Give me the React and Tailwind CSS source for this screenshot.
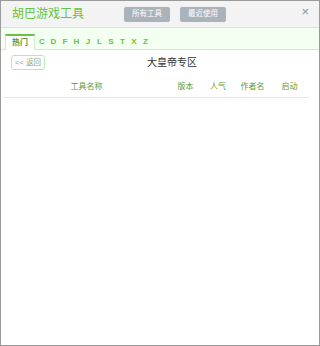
const LETTERS = ['C', 'D', 'F', 'H', 'J', 'L', 'S', 'T', 'X', 'Z']

const COLUMNS = [
  { label: '工具名称', w: 'w-[167px]' },
  { label: '版本', w: 'w-[31px]' },
  { label: '人气', w: 'w-[34px]' },
  { label: '作者名', w: 'w-[35px]' },
  { label: '启动', w: 'w-[39px]' },
]

export default function App() {
  return (
    <div
      className="flex h-[346px] w-[320px] flex-col border border-[#9a9a9a] bg-white"
      style={{ fontFamily: '"Liberation Sans", "Noto Sans CJK SC", sans-serif' }}
    >
      {/* header */}
      <div className="flex h-[27px] shrink-0 items-center border-b border-[#c9efc4] bg-[#f3f3f3] pl-[11px] pr-[10px]">
        <span className="w-[112px] text-[12px] leading-none text-[#66c43c]">胡巴游戏工具</span>
        <button className="flex h-[15px] w-[46px] items-center justify-center rounded-[2px] bg-[#aab3bb] text-[7.5px] text-white">
          所有工具
        </button>
        <button className="ml-[10px] flex h-[15px] w-[46px] items-center justify-center rounded-[2px] bg-[#aab3bb] text-[7.5px] text-white">
          最近使用
        </button>
        <span className="ml-auto -mt-[6px] text-[13px] leading-none text-[#8a929a]">×</span>
      </div>

      {/* letter tabs */}
      <div className="flex h-[22px] shrink-0 items-end border-b border-[#c9efc4] bg-[#f3fff1] pl-[4px]">
        <div className="-mb-px flex h-[16px] w-[30px] items-center justify-center border-x border-t-2 border-[#c9efc4] border-t-[#6cbf4a] bg-white text-[8px] font-bold text-[#5a9a2e]">
          热门
        </div>
        <div className="mb-[3px] ml-[4px] flex gap-[5.5px]">
          {LETTERS.map((l) => (
            <span key={l} className="w-[6px] text-center text-[8px] font-bold leading-none text-[#66c43c]">
              {l}
            </span>
          ))}
        </div>
      </div>

      {/* title row */}
      <div className="relative mt-[5px] flex h-[15px] items-center px-[10px]">
        <button className="flex h-[15px] w-[34px] items-center justify-center rounded-[3px] border border-[#b8e8b0] text-[7.5px] text-[#8aaa7a]">
          &lt;&lt; 返回
        </button>
        <span className="absolute left-[146px] text-[10px] text-[#333]">大皇帝专区</span>
      </div>

      {/* columns */}
      <div className="mx-[2px] mt-[11px] flex w-[306px] border-b border-[#dde8f2] pb-[5px] pt-[1px]">
        {COLUMNS.map((c) => (
          <span key={c.label} className={`${c.w} text-center text-[8px] leading-[10px] text-[#5f9a32]`}>
            {c.label}
          </span>
        ))}
      </div>
    </div>
  )
}
